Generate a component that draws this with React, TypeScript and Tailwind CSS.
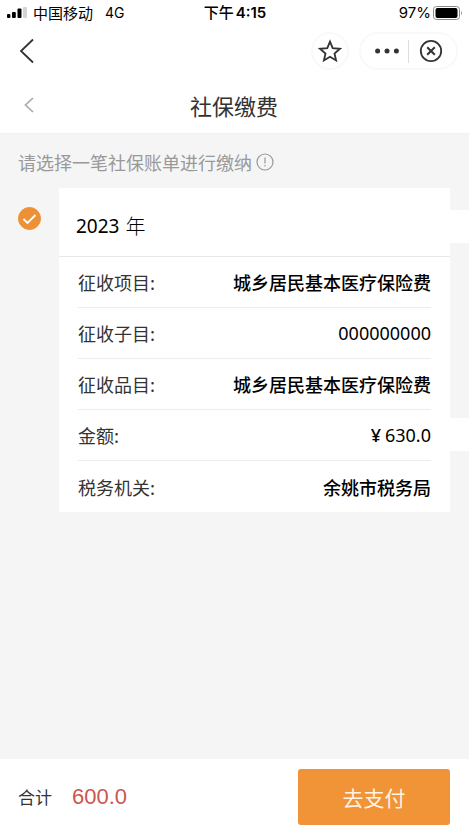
import React, { useState } from "react";

type BillRow = {
  label: string;
  value: string;
  numeric?: boolean;
  currency?: string;
  strip?: boolean;
};

const rows: BillRow[] = [
  { label: "征收项目", value: "城乡居民基本医疗保险费" },
  { label: "征收子目", value: "000000000", numeric: true },
  { label: "征收品目", value: "城乡居民基本医疗保险费" },
  { label: "金额", value: "630.0", numeric: true, currency: "¥", strip: true },
  { label: "税务机关", value: "余姚市税务局" },
];

function StatusBar() {
  return (
    <div className="grid grid-cols-3 items-center h-6 px-[7px] text-[15px] leading-6 text-black">
      <div className="flex items-center whitespace-nowrap">
        <svg width="20" height="12" viewBox="0 0 20 12" className="mr-[6px]">
          <rect x="0" y="7" width="3.4" height="4" rx="1" />
          <rect x="5" y="5" width="3.8" height="6" rx="1" />
          <rect x="10.5" y="1.5" width="4" height="9.5" rx="1" />
          <rect x="16" y="0" width="4" height="11" rx="1" fill="#d4d4d4" />
        </svg>
        <span>中国移动</span>
        <span className="ml-3 font-['Inter','Liberation_Sans',sans-serif] text-sm leading-6">
          4G
        </span>
      </div>
      <div className="text-center font-medium whitespace-nowrap">
        下午
        <span className="ml-[2px] font-['Inter','Liberation_Sans',sans-serif] font-semibold">
          4:15
        </span>
      </div>
      <div className="flex items-center justify-end font-['Inter','Liberation_Sans',sans-serif]">
        <span>97%</span>
        <svg width="32" height="14" viewBox="0 0 32 14">
          <rect x="2.5" y=".5" width="26" height="13" rx="3" fill="#fff" stroke="#8a8a8a" />
          <rect x="4.5" y="2" width="22" height="10" rx="2" />
          <path d="M30 5v4c1.4-.6 1.4-3.4 0-4z" fill="#999" />
        </svg>
      </div>
    </div>
  );
}

export default function App() {
  const [selected, setSelected] = useState(true);

  return (
    <div className="min-h-screen flex flex-col bg-white font-['Noto_Sans_CJK_SC',sans-serif]">
      <StatusBar />

      {/* Mini program bar */}
      <nav className="flex items-center h-[54px] pl-[19px] pr-3">
        <button aria-label="返回" className="mr-auto">
          <svg width="16" height="26" viewBox="0 0 16 26" fill="none" stroke="#333" strokeWidth="1.8">
            <path d="M14 1.5L2 13L14 24.5" />
          </svg>
        </button>
        <button
          aria-label="收藏"
          className="flex items-center justify-center size-[38px] rounded-full border-2 border-[#f9f9f9]"
        >
          <svg width="24" height="24" viewBox="0 0 24 24" fill="none" stroke="#333" strokeWidth="1.8">
            <path d="M12 2.6l2.7 6.6 7.2.6-5.4 4.7 1.6 7L12 17.8l-6.1 3.7 1.6-7L2.1 9.8l7.2-.6z" />
          </svg>
        </button>
        <div className="flex items-center ml-[10px] h-[38px] w-[99px] px-1 rounded-full border-2 border-[#f9f9f9]">
          <button aria-label="更多" className="flex-1 flex justify-center">
            <svg width="24" height="6" viewBox="0 0 24 6" fill="#333">
              <circle cx="2.6" cy="3" r="2.5" />
              <circle cx="12" cy="3" r="2.5" />
              <circle cx="21.4" cy="3" r="2.5" />
            </svg>
          </button>
          <div className="w-px h-[23px] bg-[#ddd]" />
          <button aria-label="关闭" className="flex-1 flex justify-center">
            <svg width="24" height="24" viewBox="0 0 24 24" fill="none" stroke="#333">
              <circle cx="12" cy="12" r="10.2" strokeWidth="1.8" />
              <path d="M8.2 8.2l7.6 7.6M15.8 8.2l-7.6 7.6" strokeWidth="2" />
            </svg>
          </button>
        </div>
      </nav>

      {/* Title */}
      <header className="grid grid-cols-[48px_1fr_50px] items-center h-14 pb-px border-b border-[#f2f2f2]">
        <button aria-label="上一页" className="pl-6">
          <svg width="10" height="16" viewBox="0 0 10 16" fill="none" stroke="#aaa" strokeWidth="1.7">
            <path d="M9 1L1.5 8L9 15" />
          </svg>
        </button>
        <h1 className="text-center text-[22px] leading-7 text-[#333]">社保缴费</h1>
      </header>

      <main className="flex-1 mr-px bg-[#f5f5f5]">
        <p className="flex items-center gap-1 pl-[18px] pt-[14px] text-lg leading-7 text-[#999]">
          请选择一笔社保账单进行缴纳
          <svg width="18" height="18" viewBox="0 0 18 18" fill="none" stroke="#999" strokeWidth="1.2">
            <circle cx="9" cy="9" r="8" />
            <path d="M9 4.5v6M9 12v1.6" />
          </svg>
        </p>

        <div className="flex mt-3 pl-[18px] pr-[19px]">
          <label className="relative mt-[19px] mr-[18px] size-[23px] shrink-0">
            <input
              type="checkbox"
              aria-label="2023 年"
              checked={selected}
              onChange={(e) => setSelected(e.target.checked)}
              className="block size-[23px] appearance-none rounded-full border border-gray-300 checked:border-[#ec9136] checked:bg-[#ec9136]"
            />
            {selected && (
              <svg
                viewBox="0 0 23 23"
                fill="none"
                stroke="#fff"
                strokeWidth="1.8"
                className="absolute inset-0 pointer-events-none"
              >
                <path d="M5.5 12l4 4 8-8" />
              </svg>
            )}
          </label>

          <section className="flex-1 bg-white">
            <div className="relative h-[69px] pl-[17px] pt-6 border-b border-[#e8e8e8]">
              <h2 className="flex items-center gap-[6px] text-[19px] leading-7 text-black">
                <span className="font-['Noto_Sans',sans-serif]">2023</span>
                <span className="font-light text-xl leading-7">年</span>
              </h2>
              <div className="absolute top-[22px] left-full w-5 h-[33px] bg-white" />
            </div>
            <dl className="pl-[19px] pr-[19px]">
              {rows.map((row) => (
                <div
                  key={row.label}
                  className="relative flex items-center justify-between h-[51px] border-b border-[#ececec] last:border-b-0 text-lg leading-7 whitespace-nowrap"
                >
                  <dt className="text-[#333]">{row.label}:</dt>
                  <dd
                    className={
                      row.numeric
                        ? "font-['Noto_Sans',sans-serif] text-black"
                        : "font-medium text-black"
                    }
                  >
                    {row.currency && <span className="mr-1 font-medium">{row.currency}</span>}
                    {row.value}
                  </dd>
                  {row.strip && (
                    <div className="absolute top-2 left-full ml-[19px] w-5 h-[33px] bg-white" />
                  )}
                </div>
              ))}
            </dl>
          </section>
        </div>
      </main>

      {/* Pay bar */}
      <footer className="flex items-center h-[76px] pl-[18px] pr-5">
        <span className="text-[17px] leading-7 text-[#333]">合计</span>
        <span className="ml-5 font-['Liberation_Sans',sans-serif] text-[22px] leading-7 text-[#cf5450]">
          600.0
        </span>
        <button className="ml-auto w-[152px] h-14 rounded-[3px] bg-[#f19337] text-[21px] leading-7 text-[#fff5e6]">
          去支付
        </button>
      </footer>
    </div>
  );
}
